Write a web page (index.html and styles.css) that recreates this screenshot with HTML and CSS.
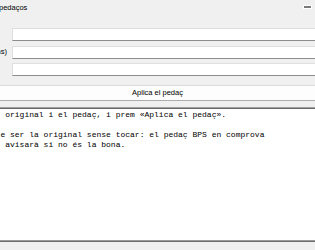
FILE: index.html
```html
<!DOCTYPE html>
<html>
<head>
<meta charset="utf-8">
<title>Aplica el pedaç</title>
<link rel="stylesheet" href="styles.css">
</head>
<body>
<div class="window">
    <div class="titleRow">
        <span class="title">pedaços</span>
        <span class="grip"><span class="gripBar"></span></span>
    </div>

    <div class="fields">
        <label class="fieldLabel"></label>
        <input type="text" class="field">
        <label class="fieldLabel"><span>Fitxer de sortida (opcions)</span></label>
        <input type="text" class="field">
        <label class="fieldLabel"></label>
        <input type="text" class="field">
    </div>

    <button class="apply">Aplica el pedaç</button>

    <div class="log"><pre class="logText">r original i el pedaç, i prem «Aplica el pedaç».

de ser la original sense tocar: el pedaç BPS en comprova
  avisarà si no és la bona.</pre></div>
</div>
</body>
</html>
```

FILE: styles.css
```css
/* Window look: plain Windows grey, small UI font */
html, body
{
    margin:             0;
    padding:            0;
    overflow:           hidden;
    background-color:   #f0f0f0;
}

body
{
    font-family:    "Liberation Sans", Arial, sans-serif;
    font-size:      7.5px;
    color:          #000000;
}

.window
{
    width:          319px;
    margin-left:    -2px;
}

.titleRow
{
    display:            flex;
    justify-content:    space-between;
    align-items:        flex-start;
    padding-top:        3px;
    height:             25px;
    box-sizing:         border-box;
    line-height:        10px;
}

.title
{
    margin-left:    1px;
}

.grip
{
    display:            flex;
    align-items:        center;
    justify-content:    center;
    width:              9px;
    height:             4px;
    margin-top:         2px;
    margin-right:       5px;
    background-color:   #ffffff;
}

.gripBar
{
    width:              7px;
    height:             2px;
    background-color:   #7a7a7a;
}

.fields
{
    display:                grid;
    grid-template-columns:  13px 1fr;
    column-gap:             1px;
    row-gap:                4.5px;
    margin-top:             3px;
}

.fieldLabel
{
    display:            flex;
    justify-content:    flex-end;
    align-items:        center;
    white-space:        nowrap;
    line-height:        10px;
    padding-right:      4px;
}

.field
{
    height:             13px;
    box-sizing:         border-box;
    margin:             0;
    padding:            0 2px;
    border:             1px solid #dedede;
    border-bottom:      1px solid #8c8c8c;
    background-color:   #ffffff;
    font-family:        "Liberation Sans", Arial, sans-serif;
    font-size:          7.5px;
    outline:            none;
}

.apply
{
    display:            block;
    width:              100%;
    height:             16px;
    box-sizing:         border-box;
    margin:             9px 0 0 0;
    padding:            0;
    border:             1px solid #dcdcdc;
    border-bottom:      1px solid #adadad;
    background-color:   #fdfdfd;
    font-family:        "Liberation Sans", Arial, sans-serif;
    font-size:          7.5px;
    line-height:        14px;
    color:              #000000;
}

.log
{
    height:             135px;
    box-sizing:         border-box;
    margin-top:         6px;
    border-top:         1px solid #a0a0a0;
    border-bottom:      1px solid #6e6e6e;
    box-shadow:         inset 0 1px 0 #696969, inset 0 -1px 0 #9a9a9a;
    background-color:   #ffffff;
    padding:            2px 0 0 2px;
    overflow:           hidden;
}

.logText
{
    margin:         0 0 0 -4.4px;
    font-family:    "Liberation Mono", "Courier New", monospace;
    font-size:      8px;
    line-height:    10px;
    white-space:    pre;
}
```
